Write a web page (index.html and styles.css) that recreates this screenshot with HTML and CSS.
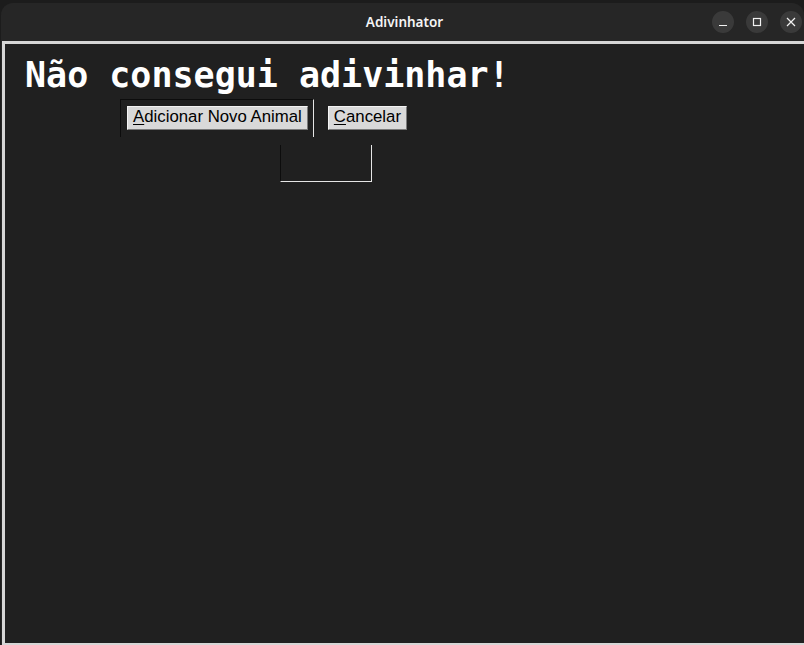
FILE: index.html
```html
<!DOCTYPE html>
<html lang="pt">
<head>
<meta charset="utf-8">
<title>Adivinhator</title>
<link rel="stylesheet" href="styles.css">
</head>
<body>
<div class="window">
  <div class="titlebar">
    <div class="tb-side"></div>
    <div class="tb-title">Adivinhator</div>
    <div class="tb-controls">
      <span class="tb-btn">
        <svg width="10" height="10" viewBox="0 0 10 10"><path d="M1 8.5H9" stroke="#f2f2f2" stroke-width="1.2" fill="none"/></svg>
      </span>
      <span class="tb-btn">
        <svg width="10" height="10" viewBox="0 0 10 10"><rect x="1.5" y="1.5" width="7" height="7" stroke="#f2f2f2" stroke-width="1.2" fill="none"/></svg>
      </span>
      <span class="tb-btn">
        <svg width="10" height="10" viewBox="0 0 10 10"><path d="M1 1L9 9M9 1L1 9" stroke="#f2f2f2" stroke-width="1.2" fill="none"/></svg>
      </span>
    </div>
  </div>
  <div class="content">
    <h1 class="heading">Não consegui adivinhar!</h1>
    <div class="btn-row">
      <div class="frame-a">
        <button class="tk-btn"><u>A</u>dicionar Novo Animal</button>
      </div>
      <button class="tk-btn cancel"><u>C</u>ancelar</button>
    </div>
    <div class="frame-b"></div>
  </div>
</div>
</body>
</html>
```

FILE: styles.css
```css
html, body {
  margin: 0;
  padding: 0;
  background: #1c1c1c;
  width: 804px;
  height: 645px;
  overflow: hidden;
}

.window {
  margin-top: 3px;
  margin-left: 1px;
  width: 803px;
  height: 642px;
  background: #262626;
  border-radius: 12px 12px 0 0;
  display: flex;
  flex-direction: column;
  overflow: hidden;
}

.titlebar {
  height: 38px;
  flex: none;
  display: grid;
  grid-template-columns: 1fr auto 1fr;
  align-items: center;
}

.tb-title {
  font-family: "Noto Sans", "DejaVu Sans", sans-serif;
  font-weight: 600;
  font-size: 13.5px;
  color: #f4f4f4;
  padding-left: 4px;
  padding-bottom: 1px;
}

.tb-controls {
  display: flex;
  justify-content: flex-end;
  gap: 12px;
  padding-right: 2px;
}

.tb-btn {
  width: 22px;
  height: 22px;
  border-radius: 50%;
  background: #3a3a3a;
  display: flex;
  align-items: center;
  justify-content: center;
}

.content {
  flex: 1;
  margin-left: 1px;
  background: #202020;
  border-left: 3px solid #d6d6d6;
  border-top: 3px solid #d6d6d6;
  border-bottom: 2px solid #d6d6d6;
}

.heading {
  margin: 11px 0 0 20px;
  font-family: "DejaVu Sans Mono", monospace;
  font-weight: 700;
  font-size: 35px;
  line-height: 40px;
  color: #ffffff;
}

.btn-row {
  display: flex;
  align-items: flex-start;
  margin-top: 4px;
  margin-left: 115px;
  gap: 14px;
}

.frame-a {
  border-top: 1px solid #0c0c0c;
  border-left: 1px solid #0c0c0c;
  border-right: 1px solid #e6e6e6;
  padding: 6px 5px 7px 6px;
  display: flex;
}

.tk-btn {
  font-family: "Liberation Sans", Arial, sans-serif;
  font-size: 16.8px;
  line-height: 20px;
  color: #000;
  background: #d9d9d9;
  border: 1px solid;
  border-color: #f4f4f4 #7a7a7a #7a7a7a #f4f4f4;
  padding: 0 5px 2px 5px;
  margin: 0;
  height: 24px;
  box-sizing: border-box;
  display: flex;
  align-items: center;
  white-space: nowrap;
}

.tk-btn u {
  text-decoration-thickness: 1px;
  text-underline-offset: 2px;
}

.cancel {
  margin-top: 7px;
}

.frame-b {
  margin-top: 8px;
  margin-left: 275px;
  width: 90px;
  height: 36px;
  border-left: 1px solid #0c0c0c;
  border-right: 1px solid #e6e6e6;
  border-bottom: 1px solid #e6e6e6;
}
```
